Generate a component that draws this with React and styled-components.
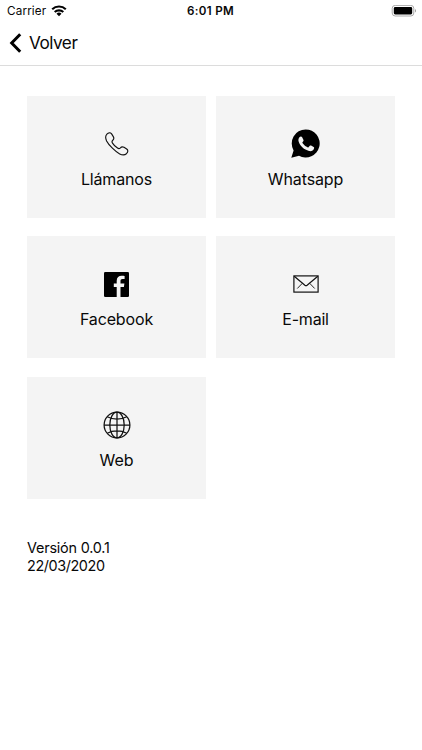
import React from "react";
import styled, { createGlobalStyle } from "styled-components";

const GlobalStyle = createGlobalStyle`
  * { box-sizing: border-box; }
  body {
    margin: 0;
    background: #fff;
    color: #080808;
    font-family: Inter, "Liberation Sans", sans-serif;
  }
`;

const Screen = styled.div`
  display: flex;
  flex-direction: column;
  width: 422px;
  height: 750px;
  overflow: hidden;
  background: #fff;
`;

const StatusBar = styled.div`
  display: grid;
  grid-template-columns: 1fr auto 1fr;
  align-items: center;
  height: 22px;
  padding: 0 6px 0 7px;
`;

const Carrier = styled.div`
  display: flex;
  align-items: center;
  gap: 5px;
  font-size: 11.7px;
  letter-spacing: 0.15px;
  line-height: 22px;
`;

const Clock = styled.div`
  margin-right: 2px;
  font-size: 11.6px;
  font-weight: 600;
  letter-spacing: 0.3px;
  line-height: 22px;
`;

const Battery = styled.div`
  display: flex;
  justify-content: flex-end;
  margin-right: -1px;
`;

const NavBar = styled.header`
  display: flex;
  align-items: center;
  gap: 7px;
  height: 44px;
  padding: 0 0 1px 9px;
  border-bottom: 1px solid #dcdcdc;
`;

const NavTitle = styled.span`
  font-size: 17.2px;
  letter-spacing: -0.5px;
  line-height: 22px;
`;

const Grid = styled.main`
  display: grid;
  grid-template-columns: 179px 179px;
  grid-auto-rows: 122px;
  gap: 18.45px 10px;
  padding: 30px 27px 0;
`;

const Tile = styled.div`
  display: flex;
  flex-direction: column;
  align-items: center;
  padding-top: 32px;
  background: #f4f4f4;
`;

const IconBox = styled.div`
  display: flex;
  align-items: center;
  justify-content: center;
  height: 32px;

  svg { display: block; }
`;

const Label = styled.span`
  margin-top: 8px;
  font-size: 16px;
  line-height: 22px;
  letter-spacing: ${(p) => p.$spacing || 0}px;
`;

const Footer = styled.footer`
  padding: 40px 27px 0;
  font-size: 14.4px;
  line-height: 18px;
`;

const Line = styled.div`
  letter-spacing: ${(p) => p.$spacing || 0}px;
`;

const WifiIcon = () => (
  <svg width="16" height="12" viewBox="0 0 16 12" fill="none" stroke="#000" strokeWidth="2.1">
    <path d="M1.2 4.3a9.8 9.8 0 0 1 13.6 0" />
    <path d="M3.7 7.1a6.2 6.2 0 0 1 8.6 0" />
    <path d="M8 11.3 5.5 8.7a3.6 3.6 0 0 1 5 0Z" fill="#000" stroke="none" />
  </svg>
);

const BatteryIcon = () => (
  <svg width="26" height="12" viewBox="0 0 26 12">
    <rect x="1.2" y="0.4" width="21.6" height="10.6" rx="3" fill="#fff" stroke="#aaa" />
    <rect x="2.8" y="2" width="18.4" height="7.4" rx="1.4" fill="#000" />
    <path d="M24 4c1.300.6 1.300 2.800 0 3.400Z" fill="#999" />
  </svg>
);

const BackIcon = () => (
  <svg width="13" height="20" viewBox="0 0 13 20" fill="none" stroke="#000" strokeWidth="3">
    <path d="M11.2 1.300 2.700 10l8.500 8.700" />
  </svg>
);

const PhoneIcon = () => (
  <svg width="24" height="24" viewBox="0 0 24 24" fill="none" stroke="#111" strokeWidth="1.15" strokeLinejoin="round">
    <path d="M1.900 2.200C3.400.6 5.300.2 6.600 1.900l1.700 2.700c.8 1.400.7 2.600-.5 3.600-1.100 1-1.100 1.700-.3 2.900 1.300 2 3 3.700 5 5 1.200.8 1.900.8 2.900-.3 1-1.200 2.200-1.300 3.600-.5l2.700 1.700c1.700 1.300 1.300 3.200-.3 4.700-1.600 1.400-4 1.500-6.700.2C10.500 19.800 3.800 13.100 1.600 8.900.3 6.200.4 3.800 1.900 2.200Z" />
  </svg>
);

const WhatsappIcon = () => (
  <svg width="29" height="30" viewBox="0 0 29 30">
    <path d="M14.600.4A14 14 0 1 1 8 26.700L.3 28.700l2.300-7.300A14 14 0 0 1 14.600.4Z" fill="#000" />
    <path
      d="M8.200 8.500c.9-1.200 2.200-1.500 2.800-.5l1.500 2.900c.3.700-.3 1.500-1 2.200-.4.500.1 1.100.8 2 1.200 1.500 2.500 2.500 4.100 3.200.6.300.9.100 1.300-.4l1.100-1.200c.4-.4.800-.4 1.300-.1l2.500 1.300c.6.300.6.700.4 1.500-.6 2.100-2.700 3.100-4.900 2.600-5.200-1.300-8.700-4.700-10.400-9.200-.5-1.600-.3-3.100.5-4.300Z"
      fill="#f4f4f4"
    />
  </svg>
);

const FacebookIcon = () => (
  <svg width="25" height="25" viewBox="0 0 25 25">
    <rect width="25" height="25" rx="1.3" fill="#000" />
    <path
      d="M12.700 25V15.100H9.800V11.500h2.900V8.700c0-3.300 2-5 5-5 1.400 0 2.500.1 2.900.2v3.200h-2c-1.600 0-2.100.8-2.100 1.900v2.500h3.900l-.5 3.600h-3.400V25Z"
      fill="#f4f4f4"
    />
  </svg>
);

const MailIcon = () => (
  <svg width="26" height="18" viewBox="0 0 26 18" fill="none" stroke="#111" strokeWidth="1.2">
    <rect x="0.900" y="0.900" width="24.200" height="16.200" />
    <path d="m1.200 1.300 10.700 8.900c.7.500 1.500.5 2.200 0l10.700-8.900" />
    <path d="m9.300 8.300-5 5.200M16.700 8.300l5 5.200" strokeWidth="0.9" />
  </svg>
);

const GlobeIcon = () => (
  <svg width="28" height="28" viewBox="0 0 28 28" fill="none" stroke="#111" strokeWidth="1.25">
    <circle cx="14" cy="14" r="12.900" />
    <ellipse cx="14" cy="14" rx="7.200" ry="12.900" />
    <path d="M14 1v26M1 14h26M4.300 5.700c5.500 3.100 13.900 3.100 19.400 0M4.300 22.300c5.500-3.100 13.900-3.100 19.400 0" />
  </svg>
);

const contacts = [
  { label: "Llámanos", Icon: PhoneIcon, spacing: -0.15 },
  { label: "Whatsapp", Icon: WhatsappIcon, spacing: -0.13 },
  { label: "Facebook", Icon: FacebookIcon, spacing: -0.13 },
  { label: "E-mail", Icon: MailIcon, spacing: -0.2 },
  { label: "Web", Icon: GlobeIcon, spacing: 0 },
];

export default function App() {
  return (
    <Screen>
      <GlobalStyle />
      <StatusBar>
        <Carrier>
          Carrier
          <WifiIcon />
        </Carrier>
        <Clock>6:01 PM</Clock>
        <Battery>
          <BatteryIcon />
        </Battery>
      </StatusBar>
      <NavBar>
        <BackIcon />
        <NavTitle>Volver</NavTitle>
      </NavBar>
      <Grid>
        {contacts.map(({ label, Icon, spacing }) => (
          <Tile key={label}>
            <IconBox>
              <Icon />
            </IconBox>
            <Label $spacing={spacing}>{label}</Label>
          </Tile>
        ))}
      </Grid>
      <Footer>
        <Line $spacing={-0.2}>Versión 0.0.1</Line>
        <Line $spacing={-0.4}>22/03/2020</Line>
      </Footer>
    </Screen>
  );
}
